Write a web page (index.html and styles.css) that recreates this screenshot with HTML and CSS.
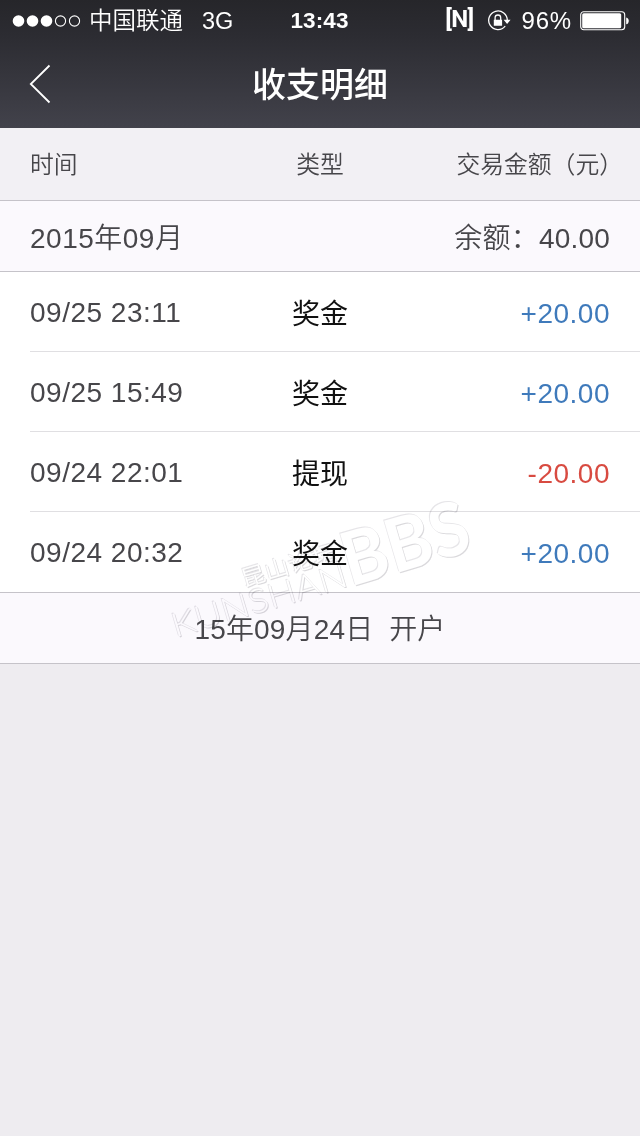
FILE: index.html
```html
<!DOCTYPE html>
<html lang="zh-CN">
<head>
  <meta charset="UTF-8" />
  <meta name="viewport" content="width=device-width, initial-scale=1.0"/>
  <title>收支明细</title>
  <link rel="stylesheet" href="styles.css">
</head>
<body>
  <header class="top">
    <div class="status">
      <div class="status-left">
        <svg class="signal" width="70" height="14" viewBox="0 0 70 14">
          <g fill="#fff">
            <circle cx="6.5" cy="7" r="5.8"/>
            <circle cx="20.5" cy="7" r="5.8"/>
            <circle cx="34.5" cy="7" r="5.8"/>
          </g>
          <g fill="none" stroke="#fff" stroke-width="1.1">
            <circle cx="48.5" cy="7" r="5.1"/>
            <circle cx="62.5" cy="7" r="5.1"/>
          </g>
        </svg>
        <span class="carrier">中国联通</span>
        <span class="network">3G</span>
      </div>
      <div class="clock">13:43</div>
      <div class="status-right">
        <span class="n-mark">[N]</span>
        <svg class="lock" width="24" height="22" viewBox="0 0 24 22">
          <g fill="none" stroke="#fff" stroke-width="1.3">
            <path d="M18.2 16.2A9.3 9.3 0 1 1 20.3 10.6"/>
            <path d="M8.1 10V7.8a2.8 2.8 0 0 1 5.6 0V10"/>
          </g>
          <path fill="#fff" d="M6.8 9.8h8.3v6H6.8zM16.6 9.8h7l-3.5 4.2z"/>
        </svg>
        <span class="percent">96%</span>
        <svg class="battery" width="50" height="20" viewBox="0 0 50 20">
          <rect x=".7" y=".7" width="44" height="18" rx="3" fill="none" stroke="#fff" stroke-width="1.1"/>
          <rect x="2.2" y="2.2" width="39" height="15" rx="1.5" fill="#fff"/>
          <path fill="#fff" d="M46.2 6.4c3.4.6 3.4 6.3 0 6.9z"/>
        </svg>
      </div>
    </div>
    <nav class="nav">
      <svg class="back" width="22" height="40" viewBox="0 0 22 40">
        <path d="M20.5 1.5L1.8 20l18.7 18.5" fill="none" stroke="#fff" stroke-width="1.8"/>
      </svg>
      <h1>收支明细</h1>
    </nav>
  </header>

  <main class="list">
    <div class="row head">
      <span>时间</span><span class="type">类型</span><span class="amount">交易金额（元）</span>
    </div>
    <div class="row month">
      <span>2015年09月</span><span class="balance">余额：40.00</span>
    </div>
    <div class="row item">
      <span>09/25 23:11</span><span class="type">奖金</span><span class="amount plus">+20.00</span>
    </div>
    <div class="row item">
      <span>09/25 15:49</span><span class="type">奖金</span><span class="amount plus">+20.00</span>
    </div>
    <div class="row item">
      <span>09/24 22:01</span><span class="type">提现</span><span class="amount minus">-20.00</span>
    </div>
    <div class="row item">
      <span>09/24 20:32</span><span class="type">奖金</span><span class="amount plus">+20.00</span>
    </div>
    <div class="open">15年09月24日&nbsp; 开户</div>

    <!-- embossed site mark over the list -->
    <svg class="watermark" width="320" height="150" viewBox="0 0 320 150">
      <g transform="translate(20 139) rotate(-16.5)">
        <text class="wm-cn" x="75" y="-29" textLength="98" lengthAdjust="spacingAndGlyphs">昆山论坛</text>
        <text class="wm-en" x="-5" y="0" textLength="182" lengthAdjust="spacingAndGlyphs">KUNSHAN</text>
        <text class="wm-bbs" x="177" y="1" textLength="130" lengthAdjust="spacingAndGlyphs">BBS</text>
      </g>
    </svg>
  </main>
</body>
</html>
```
FILE: styles.css
```css
* { box-sizing: border-box; }
body {
  margin: 0;
  min-height: 1136px;
  background: #eeecf0;
  color: #47464a;
  font-family: "Liberation Sans", "Noto Sans CJK SC", sans-serif;
  font-size: 28px;
  font-weight: 350;
}
.top {
  height: 128px;
  color: #fff;
  background: linear-gradient(#26262a 0, #2c2c32 36px, #42424b 128px);
}
.status {
  height: 40px;
  display: grid;
  grid-template-columns: 1fr auto 1fr;
  align-items: center;
  padding: 0 10px 0 12px;
  font-size: 24px;
  line-height: 40px;
}
.status-left, .status-right {
  display: flex;
  align-items: center;
}
.status-right { justify-content: flex-end; }
.carrier { margin-left: 7px; padding-top: 1px; font-size: 23.5px; }
.network { margin-left: 19px; padding-top: 1px; font-size: 23.5px; }
.clock {
  padding: 1px 3px 0 0;
  font-weight: bold;
  font-size: 22.5px;
  letter-spacing: 0.1px;
}
.n-mark {
  font-family: Roboto, sans-serif;
  font-weight: bold;
  font-size: 24px;
  line-height: 36px;
  letter-spacing: -0.6px;
  padding-bottom: 3px;
}
.lock { margin-left: 13px; }
.percent { margin: 0 8px 0 11px; padding-top: 1px; letter-spacing: 0.8px; }
.nav {
  height: 88px;
  display: grid;
  grid-template-columns: 100px 1fr 100px;
  align-items: center;
}
.back { margin-left: 29px; }
h1 {
  margin: 0;
  padding-top: 2px;
  text-align: center;
  font-size: 34px;
  font-weight: 500;
  line-height: 86px;
}
.list { position: relative; background: #fff; }
.row {
  display: grid;
  grid-template-columns: 1fr 100px 1fr;
  align-items: center;
  padding: 0 30px;
  letter-spacing: 0.5px;
}
.type { text-align: center; color: #111; letter-spacing: 0; }
.amount { text-align: right; }
.head {
  height: 73px;
  padding-bottom: 3px;
  background: #f2f0f4;
  border-bottom: 1px solid #c5c3c9;
  font-size: 23.8px;
  letter-spacing: 0;
}
.head .type { color: inherit; }
/* the closing full-width bracket hangs past the column edge */
.head .amount { margin-right: -13px; white-space: nowrap; }
.month {
  height: 71px;
  padding-bottom: 1px;
  grid-template-columns: 1fr auto;
  background: #fbf9fd;
  border-bottom: 1px solid #c5c3c9;
}
.balance { letter-spacing: 0.2px; }
.item {
  height: 80px;
  margin-left: 30px;
  padding-left: 0;
  border-bottom: 1px solid #e0dfe2;
}
.item span { padding-top: 2px; }
.item .type { padding: 0; font-weight: 400; }
.item .amount { padding-top: 4px; }
.item:nth-child(6) {
  height: 81px;
  margin-left: 0;
  padding-left: 30px;
  border-bottom-color: #c5c3c9;
}
/* keep the columns of the inset rows on the page centre */
.item:not(:nth-child(6)) { grid-template-columns: 240px 100px 1fr; }
.plus { color: #3f7abb; }
.minus { color: #d84b41; }
.open {
  height: 71px;
  padding-top: 2px;
  line-height: 70px;
  text-align: center;
  letter-spacing: 0.15px;
  background: #fbf9fd;
  border-bottom: 1px solid #c5c3c9;
}
.watermark {
  position: absolute;
  left: 160px;
  top: 369px;
  pointer-events: none;
  overflow: visible;
  mix-blend-mode: multiply;
  filter: drop-shadow(1px 1px 0.4px #dad9dc) drop-shadow(-0.4px -0.2px 0 #e6e5e8);
}
.watermark text { fill: #fff; }
.wm-cn { font-family: "Noto Sans CJK SC", sans-serif; font-size: 22px; }
.wm-en { font-family: Lato, sans-serif; font-size: 33px; font-weight: 300; }
.wm-bbs { font-family: Lato, sans-serif; font-size: 74px; font-weight: 700; }
```
